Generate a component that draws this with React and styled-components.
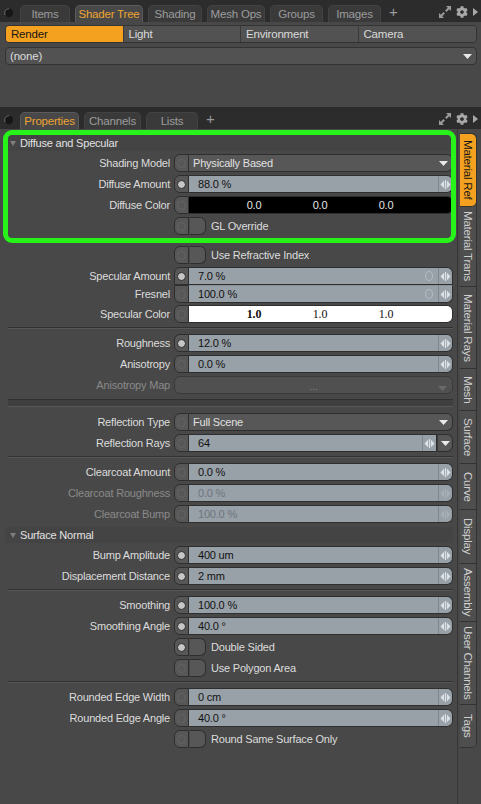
import React from "react";
import styled, { createGlobalStyle } from "styled-components";
import { FaCog } from "react-icons/fa";

const GlobalStyle = createGlobalStyle`
  html, body { margin: 0; padding: 0; background: #484848; }
  body {
    font-family: "Liberation Sans", Arial, sans-serif;
    font-size: 11px;
    letter-spacing: -0.2px;
  }
  * { box-sizing: border-box; }
`;

const topTabs = [
  ["Items", 50],
  ["Shader Tree", 68, true],
  ["Shading", 54],
  ["Mesh Ops", 58],
  ["Groups", 53],
  ["Images", 53],
];

const propTabs = [
  ["Properties", 59, true],
  ["Channels", 57],
  ["Lists", 52],
];

const sideTabs = [
  ["Material Ref", 73, true],
  ["Material Trans", 80],
  ["Material Rays", 82],
  ["Mesh", 42],
  ["Surface", 53],
  ["Curve", 46],
  ["Display", 54],
  ["Assembly", 58],
  ["User Channels", 83],
  ["Tags", 42],
];

const Caret = ({ faint }) => (
  <svg width="9" height="5" viewBox="0 0 9 5">
    <path d="M0 0 H9 L4.5 5Z" fill={faint ? "#6a6a6a" : "#e8e8e8"} />
  </svg>
);

const Spin = ({ faint }) => (
  <SpinBox $faint={faint}>
    <svg width="11" height="9" viewBox="0 0 11 9">
      <path d="M4.2 0.5 L0.5 4.5 L4.2 8.5Z" />
      <rect x="5" y="0" width="1" height="9" />
      <path d="M6.8 0.5 L10.5 4.5 L6.8 8.5Z" />
    </svg>
  </SpinBox>
);

const Expand = () => (
  <svg width="12" height="12" viewBox="0 0 12 12" fill="#9a9a9a">
    <path d="M7 0 H12 V5 L10.2 3.2 L7.5 5.9 L6.1 4.5 L8.8 1.8Z" />
    <path d="M5 12 H0 V7 L1.8 8.8 L4.5 6.1 L5.9 7.5 L3.2 10.2Z" />
  </svg>
);

const Dot = () => (
  <svg width="10" height="10" viewBox="0 0 10 10">
    <circle cx="5" cy="5" r="4.2" fill="#161616" />
    <path d="M5 0.8 A4.2 4.2 0 0 0 1.2 7" stroke="#6a6a6a" strokeWidth="1" fill="none" />
  </svg>
);

function TabStrip({ tabs }) {
  return (
    <Bar>
      <DotWrap>
        <Dot />
      </DotWrap>
      <TabList>
        {tabs.map(([t, w, a]) => (
          <TopTab key={t} $w={w} $active={a}>
            {t}
          </TopTab>
        ))}
        <Plus>+</Plus>
      </TabList>
      <BarIcons>
        <Expand />
        <FaCog size={12} color="#a8a8a8" />
        <svg width="5" height="8" viewBox="0 0 5 8">
          <path d="M0 0 L5 4 L0 8Z" fill="#a8a8a8" />
        </svg>
      </BarIcons>
    </Bar>
  );
}

const Row = ({ label, dim, gap, children }) => (
  <RowGrid $gap={gap}>
    <Label $dim={dim}>{label}</Label>
    <Ctl>{children}</Ctl>
  </RowGrid>
);

const Num = ({ value, on, dim, ring, join }) => (
  <>
    <Env $join={join}>
      <Knob $on={on} />
    </Env>
    <NumField $join={join}>
      <Value $dim={dim}>{value}</Value>
      {ring && <Ring />}
      <Spin faint={dim} />
    </NumField>
  </>
);

const Choice = ({ value }) => (
  <>
    <Env>
      <Knob />
    </Env>
    <DropField>
      <Value $light $pad={4}>
        {value}
      </Value>
      <CaretBox>
        <Caret />
      </CaretBox>
    </DropField>
  </>
);

const Color = ({ values, light, bold }) => (
  <>
    <Env>
      <Knob />
    </Env>
    <Swatch $light={light}>
      {values.map((v, i) => (
        <SwatchVal key={i} $bold={bold && i === 0}>
          {v}
        </SwatchVal>
      ))}
    </Swatch>
  </>
);

const Toggle = ({ text, on }) => (
  <>
    <Env>
      <Knob $on={on} />
    </Env>
    <Check />
    <ToggleText>{text}</ToggleText>
  </>
);

export default function App() {
  return (
    <Page>
      <GlobalStyle />
      <TabStrip tabs={topTabs} />
      <Upper>
        <Modes>
          <Mode $active>Render</Mode>
          <Mode>Light</Mode>
          <Mode>Environment</Mode>
          <Mode>Camera</Mode>
        </Modes>
        <Select>
          <span>(none)</span>
          <Caret />
        </Select>
      </Upper>
      <TabStrip tabs={propTabs} />
      <Main>
        <Content>
          <Highlighted>
            <Header>
              <Tri />
              Diffuse and Specular
            </Header>
            <Row label="Shading Model">
              <Choice value="Physically Based" />
            </Row>
            <Row label="Diffuse Amount">
              <Num value="88.0 %" on />
            </Row>
            <Row label="Diffuse Color">
              <Color values={["0.0", "0.0", "0.0"]} />
            </Row>
            <Row label="">
              <Toggle text="GL Override" />
            </Row>
            <GreenFrame />
          </Highlighted>

          <Row label="">
            <Toggle text="Use Refractive Index" />
          </Row>
          <Row label="Specular Amount" gap={0}>
            <Num value="7.0 %" on ring join="top" />
          </Row>
          <Row label="Fresnel" gap={2}>
            <Num value="100.0 %" ring join="bottom" />
          </Row>
          <Row label="Specular Color">
            <Color values={["1.0", "1.0", "1.0"]} light bold />
          </Row>
          <Sep />
          <Row label="Roughness">
            <Num value="12.0 %" on />
          </Row>
          <Row label="Anisotropy">
            <Num value="0.0 %" />
          </Row>
          <Row label="Anisotropy Map" dim>
            <MapField>
              <span>...</span>
              <MapCaret>
                <Caret faint />
              </MapCaret>
            </MapField>
          </Row>
          <Band />
          <Row label="Reflection Type">
            <Choice value="Full Scene" />
          </Row>
          <Row label="Reflection Rays">
            <Env>
              <Knob />
            </Env>
            <NumField $join="tail">
              <Value>64</Value>
              <Spin />
            </NumField>
            <DropTail>
              <Caret />
            </DropTail>
          </Row>
          <Sep />
          <Row label="Clearcoat Amount">
            <Num value="0.0 %" />
          </Row>
          <Row label="Clearcoat Roughness" dim>
            <Num value="0.0 %" dim />
          </Row>
          <Row label="Clearcoat Bump" dim>
            <Num value="100.0 %" dim />
          </Row>
          <Header $top={1}>
            <Tri />
            Surface Normal
          </Header>
          <Row label="Bump Amplitude">
            <Num value="400 um" on />
          </Row>
          <Row label="Displacement Distance">
            <Num value="2 mm" on />
          </Row>
          <Sep />
          <Row label="Smoothing">
            <Num value="100.0 %" on />
          </Row>
          <Row label="Smoothing Angle">
            <Num value="40.0 °" on />
          </Row>
          <Row label="">
            <Toggle text="Double Sided" on />
          </Row>
          <Row label="">
            <Toggle text="Use Polygon Area" />
          </Row>
          <Sep />
          <Row label="Rounded Edge Width">
            <Num value="0 cm" />
          </Row>
          <Row label="Rounded Edge Angle">
            <Num value="40.0 °" />
          </Row>
          <Row label="">
            <Toggle text="Round Same Surface Only" />
          </Row>
        </Content>
        <SideTabs>
          <SideStack>
            {sideTabs.map(([t, h, a]) => (
              <SideTab key={t} $h={h} $active={a}>
                <span>{t}</span>
              </SideTab>
            ))}
          </SideStack>
        </SideTabs>
      </Main>
    </Page>
  );
}

const Page = styled.div`
  width: 481px;
  height: 804px;
  overflow: hidden;
  background: #484848;
  display: flex;
  flex-direction: column;
  color: #dcdcdc;
`;

const Bar = styled.div`
  height: 22px;
  flex: none;
  background: #2c2c2c;
  display: flex;
  align-items: flex-end;
  padding-left: 4px;
`;

const DotWrap = styled.div`
  width: 16px;
  height: 22px;
  display: flex;
  align-items: center;
  padding-top: 3px;
`;

const TabList = styled.div`
  display: flex;
  align-items: flex-end;
  gap: 5px;
  flex: 1;
`;

const TopTab = styled.div`
  width: ${(p) => p.$w}px;
  height: 17px;
  border-radius: 5px 5px 0 0;
  background: ${(p) => (p.$active ? "#484848" : "#3a3a3a")};
  border: 1px solid ${(p) => (p.$active ? "#5a5a5a" : "#424242")};
  border-bottom: none;
  color: ${(p) => (p.$active ? "#eea433" : "#9c9c9c")};
  font-size: 11.5px;
  display: flex;
  align-items: center;
  justify-content: center;
`;

const Plus = styled.div`
  color: #9a9a9a;
  font-size: 15px;
  height: 18px;
  line-height: 16px;
  padding-left: 3px;
`;

const BarIcons = styled.div`
  height: 22px;
  display: flex;
  align-items: center;
  gap: 5px;
  padding: 2px 3px 0 0;
`;

const Upper = styled.div`
  height: 85px;
  flex: none;
  padding: 3px 4px 0 5px;
  display: flex;
  flex-direction: column;
  gap: 4px;
`;

const Modes = styled.div`
  display: grid;
  grid-template-columns: repeat(4, 1fr);
  height: 18px;
  border: 1px solid #333;
  border-radius: 4px;
  overflow: hidden;
`;

const Mode = styled.div`
  background: ${(p) => (p.$active ? "#f4a11f" : "#525252")};
  color: ${(p) => (p.$active ? "#161616" : "#dadada")};
  border-right: 1px solid #3a3a3a;
  padding-left: 5px;
  font-size: 11.5px;
  display: flex;
  align-items: center;
  &:last-child {
    border-right: none;
  }
`;

const Select = styled.div`
  height: 18px;
  border: 1px solid #333;
  border-radius: 4px;
  background: #525252;
  color: #dcdcdc;
  font-size: 11.5px;
  display: flex;
  align-items: center;
  justify-content: space-between;
  padding: 0 4px 0 4px;
`;

const Main = styled.div`
  flex: 1;
  display: flex;
  min-height: 0;
`;

const Content = styled.div`
  width: 457px;
  padding: 6px 4px 0 0;
  display: flex;
  flex-direction: column;
`;

const Highlighted = styled.div`
  position: relative;
  margin-bottom: 8px;
`;

const GreenFrame = styled.div`
  position: absolute;
  left: 3px;
  right: -3px;
  top: -5px;
  bottom: -5px;
  border: 5px solid #27f31a;
  border-radius: 9px;
  pointer-events: none;
`;

const Header = styled.div`
  height: 16px;
  margin: ${(p) => p.$top || 0}px 0 3px 5px;
  padding-left: 5px;
  background: #444;
  border-radius: 3px 0 0 3px;
  color: #e2e2e2;
  display: flex;
  align-items: center;
  gap: 4px;
`;

const Tri = styled.span`
  width: 0;
  height: 0;
  border-left: 3.5px solid transparent;
  border-right: 3.5px solid transparent;
  border-top: 5px solid #7e7e7e;
`;

const RowGrid = styled.div`
  display: grid;
  grid-template-columns: 170px 279px;
  column-gap: 4px;
  height: 18px;
  margin-bottom: ${(p) => (p.$gap === undefined ? 3 : p.$gap)}px;
  align-items: center;
`;

const Label = styled.div`
  text-align: right;
  white-space: nowrap;
  color: ${(p) => (p.$dim ? "#8a8a8a" : "#dcdcdc")};
`;

const Ctl = styled.div`
  display: flex;
  align-items: stretch;
  height: 18px;
`;

const Env = styled.div`
  width: 15px;
  flex: none;
  background: #575757;
  border: 1px solid #2e2e2e;
  border-radius: ${(p) =>
    p.$join === "top" ? "6px 0 0 0" : p.$join === "bottom" ? "0 0 0 6px" : "6px 0 0 6px"};
  display: flex;
  align-items: center;
  justify-content: center;
`;

const Knob = styled.span`
  width: 9px;
  height: 9px;
  border-radius: 50%;
  background: ${(p) => (p.$on ? "#c6c6c6" : "transparent")};
  border: 1px solid ${(p) => (p.$on ? "#2a2a2a" : "#646464")};
`;

const radiusFor = (join) =>
  join === "top"
    ? "0 6px 0 0"
    : join === "bottom"
    ? "0 0 6px 0"
    : join === "tail"
    ? "0"
    : "0 6px 6px 0";

const NumField = styled.div`
  flex: 1;
  background: #98a0a8;
  border: 1px solid #2e2e2e;
  border-left: none;
  border-top-color: ${(p) => (p.$join === "bottom" ? "#8a9298" : "#2e2e2e")};
  border-radius: ${(p) => radiusFor(p.$join)};
  display: flex;
  align-items: center;
`;

const Value = styled.span`
  flex: 1;
  padding-left: ${(p) => (p.$pad === undefined ? 9 : p.$pad)}px;
  color: ${(p) => (p.$light ? "#e0e0e0" : p.$dim ? "#6e767e" : "#121212")};
  white-space: nowrap;
`;

const Ring = styled.span`
  width: 8px;
  height: 10px;
  border: 1.5px solid #b4bcc4;
  border-radius: 50%;
  margin-right: 5px;
`;

const SpinBox = styled.div`
  width: 14px;
  align-self: stretch;
  border-left: 1px solid #7e868e;
  display: flex;
  align-items: center;
  justify-content: center;
  fill: ${(p) => (p.$faint ? "#a7afb7" : "#dde2e7")};
`;

const DropField = styled.div`
  flex: 1;
  background: #575757;
  border: 1px solid #2e2e2e;
  border-left: none;
  border-radius: 0 6px 6px 0;
  display: flex;
  align-items: center;
`;

const CaretBox = styled.div`
  width: 16px;
  display: flex;
  justify-content: center;
  padding-right: 2px;
`;

const DropTail = styled.div`
  width: 16px;
  flex: none;
  background: #575757;
  border: 1px solid #2e2e2e;
  border-left: 1px solid #3a3a3a;
  border-radius: 0 6px 6px 0;
  display: flex;
  align-items: center;
  justify-content: center;
`;

const MapField = styled.div`
  flex: 1;
  position: relative;
  background: #505050;
  border: 1px solid #3a3a3a;
  border-radius: 6px;
  color: #7a7a7a;
  display: flex;
  align-items: center;
  justify-content: center;
  line-height: 1;
  padding-top: 2px;
`;

const MapCaret = styled.span`
  position: absolute;
  right: 5px;
  top: 5px;
`;

const Swatch = styled.div`
  flex: 1;
  background: ${(p) => (p.$light ? "#ffffff" : "#000000")};
  color: ${(p) => (p.$light ? "#111" : "#e6e6e6")};
  font-family: ${(p) =>
    p.$light ? '"Liberation Serif", "Times New Roman", serif' : "inherit"};
  font-size: ${(p) => (p.$light ? "12px" : "11px")};
  border: 1px solid #2e2e2e;
  border-left: none;
  border-radius: 0 6px 6px 0;
  display: grid;
  grid-template-columns: repeat(3, 1fr);
  padding: 0 33px 0 32px;
  align-items: center;
`;

const SwatchVal = styled.span`
  text-align: center;
  font-weight: ${(p) => (p.$bold ? 700 : 400)};
`;

const Check = styled.div`
  width: 17px;
  flex: none;
  background: #575757;
  border: 1px solid #2e2e2e;
  border-left: 1px solid #4a4a4a;
  border-radius: 0 6px 6px 0;
`;

const ToggleText = styled.span`
  margin-left: 5px;
  align-self: center;
  color: #dcdcdc;
  white-space: nowrap;
`;

const Sep = styled.div`
  margin: 1px 0 5px 8px;
  border-top: 1px solid #313131;
  border-bottom: 1px solid #575757;
`;

const Band = styled.div`
  margin: 2px 0 6px 8px;
  height: 8px;
  background: #3f3f3f;
  border-top: 1px solid #303030;
  border-bottom: 1px solid #575757;
`;

const SideTabs = styled.div`
  width: 24px;
  border-left: 1px solid #363636;
  padding: 4px 4px 0 2px;
`;

const SideStack = styled.div`
  display: flex;
  flex-direction: column;
  border-radius: 0 5px 5px 0;
  overflow: hidden;
  border: 1px solid #333;
  border-left: none;
`;

const SideTab = styled.div`
  height: ${(p) => p.$h}px;
  flex: none;
  background: ${(p) => (p.$active ? "#f4a11f" : "#4e4e4e")};
  color: ${(p) => (p.$active ? "#161616" : "#cfcfcf")};
  border-bottom: 1px solid #333;
  border-radius: ${(p) => (p.$active ? "0 5px 5px 0" : "0")};
  display: flex;
  align-items: center;
  justify-content: center;
  font-size: 11.5px;
  &:last-child {
    border-bottom: none;
  }
  span {
    writing-mode: vertical-rl;
    white-space: nowrap;
  }
`;
